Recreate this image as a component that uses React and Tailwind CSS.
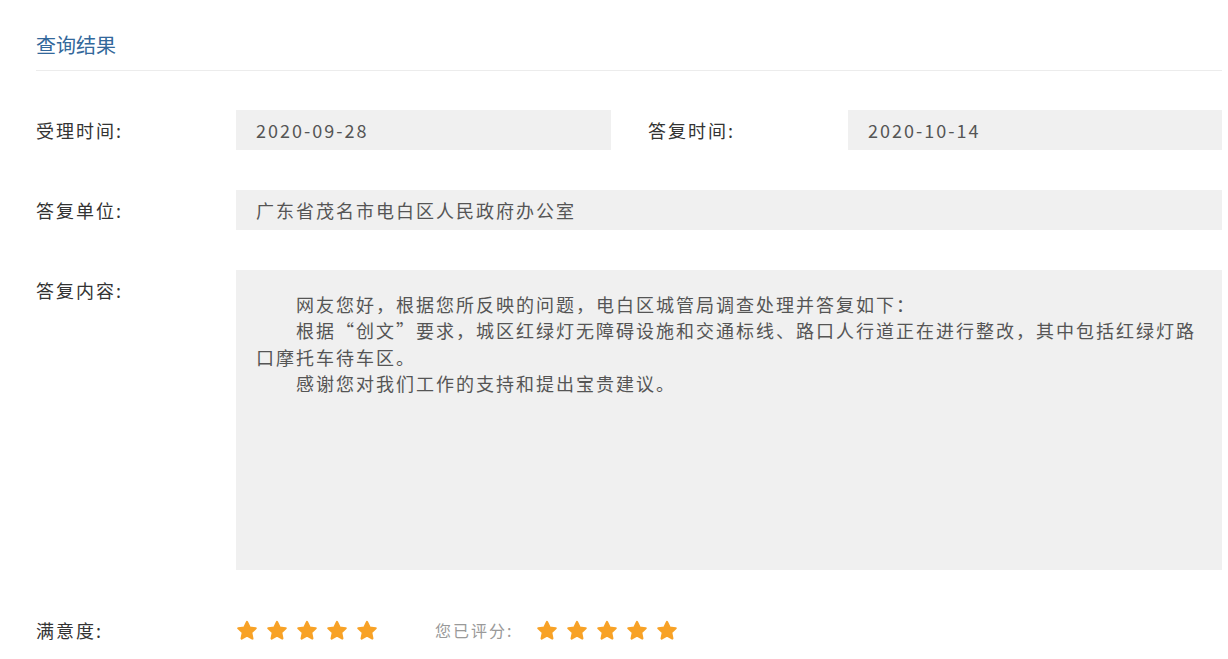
import React from "react";

const font = { fontFamily: '"Noto Sans CJK SC", "Noto Sans", sans-serif' };

const Star = () => (
  <svg width="22" height="21" viewBox="0 0 24 23">
    <path
      d="M12 2.2l2.9 6.1 6.6.8-4.9 4.6 1.3 6.6L12 17l-5.9 3.3 1.3-6.6-4.9-4.6 6.6-.8z"
      fill="#f8a226"
      stroke="#f8a226"
      strokeWidth="2.4"
      strokeLinejoin="round"
    />
  </svg>
);

const Stars = () => (
  <div className="flex items-center gap-[8px]">
    {[0, 1, 2, 3, 4].map((i) => (
      <Star key={i} />
    ))}
  </div>
);

const Label = ({ children }) => (
  <div className="w-[200px] shrink-0 text-[18px] leading-[40px] tracking-[2px] text-[#333]">{children}</div>
);

const Value = ({ children, className = "" }) => (
  <div
    className={`bg-[#f0f0f0] h-[40px] px-[20px] text-[18px] leading-[40px] tracking-[2px] text-[#555] ${className}`}>
    {children}
  </div>
);

export default function App() {
  return (
    <div className="min-h-screen bg-white pl-[36px] pr-[6px]" style={font}>
      <div className="pt-[30px] pb-[10px] border-b border-[#ececec]">
        <h2 className="text-[20px] leading-[30px] text-[#33689b]">查询结果</h2>
      </div>

      <div className="mt-[39px] flex flex-col gap-[40px]">
        <div className="flex">
          <div className="flex w-[575px]">
            <Label>受理时间:</Label>
            <Value className="flex-1">2020-09-28</Value>
          </div>
          <div className="flex flex-1 ml-[37px]">
            <Label>答复时间:</Label>
            <Value className="flex-1">2020-10-14</Value>
          </div>
        </div>

        <div className="flex">
          <Label>答复单位:</Label>
          <Value className="flex-1">广东省茂名市电白区人民政府办公室</Value>
        </div>

        <div className="flex">
          <Label>答复内容:</Label>
          <div className="flex-1 h-[300px] bg-[#f0f0f0] px-[20px] pt-[21px] text-[18px] leading-[26.3px] tracking-[2px] text-[#555]">
            <p className="indent-[40px]">网友您好，根据您所反映的问题，电白区城管局调查处理并答复如下：</p>
            <p className="indent-[40px]">
              根据“创文”要求，城区红绿灯无障碍设施和交通标线、路口人行道正在进行整改，其中包括红绿灯路口摩托车待车区。
            </p>
            <p className="indent-[40px]">感谢您对我们工作的支持和提出宝贵建议。</p>
          </div>
        </div>

        <div className="flex items-center h-[40px]">
          <Label>满意度:</Label>
          <Stars />
          <span className="ml-[57px] mr-[23px] text-[16px] tracking-[2px] text-[#999]">您已评分:</span>
          <Stars />
        </div>
      </div>
    </div>
  );
}
